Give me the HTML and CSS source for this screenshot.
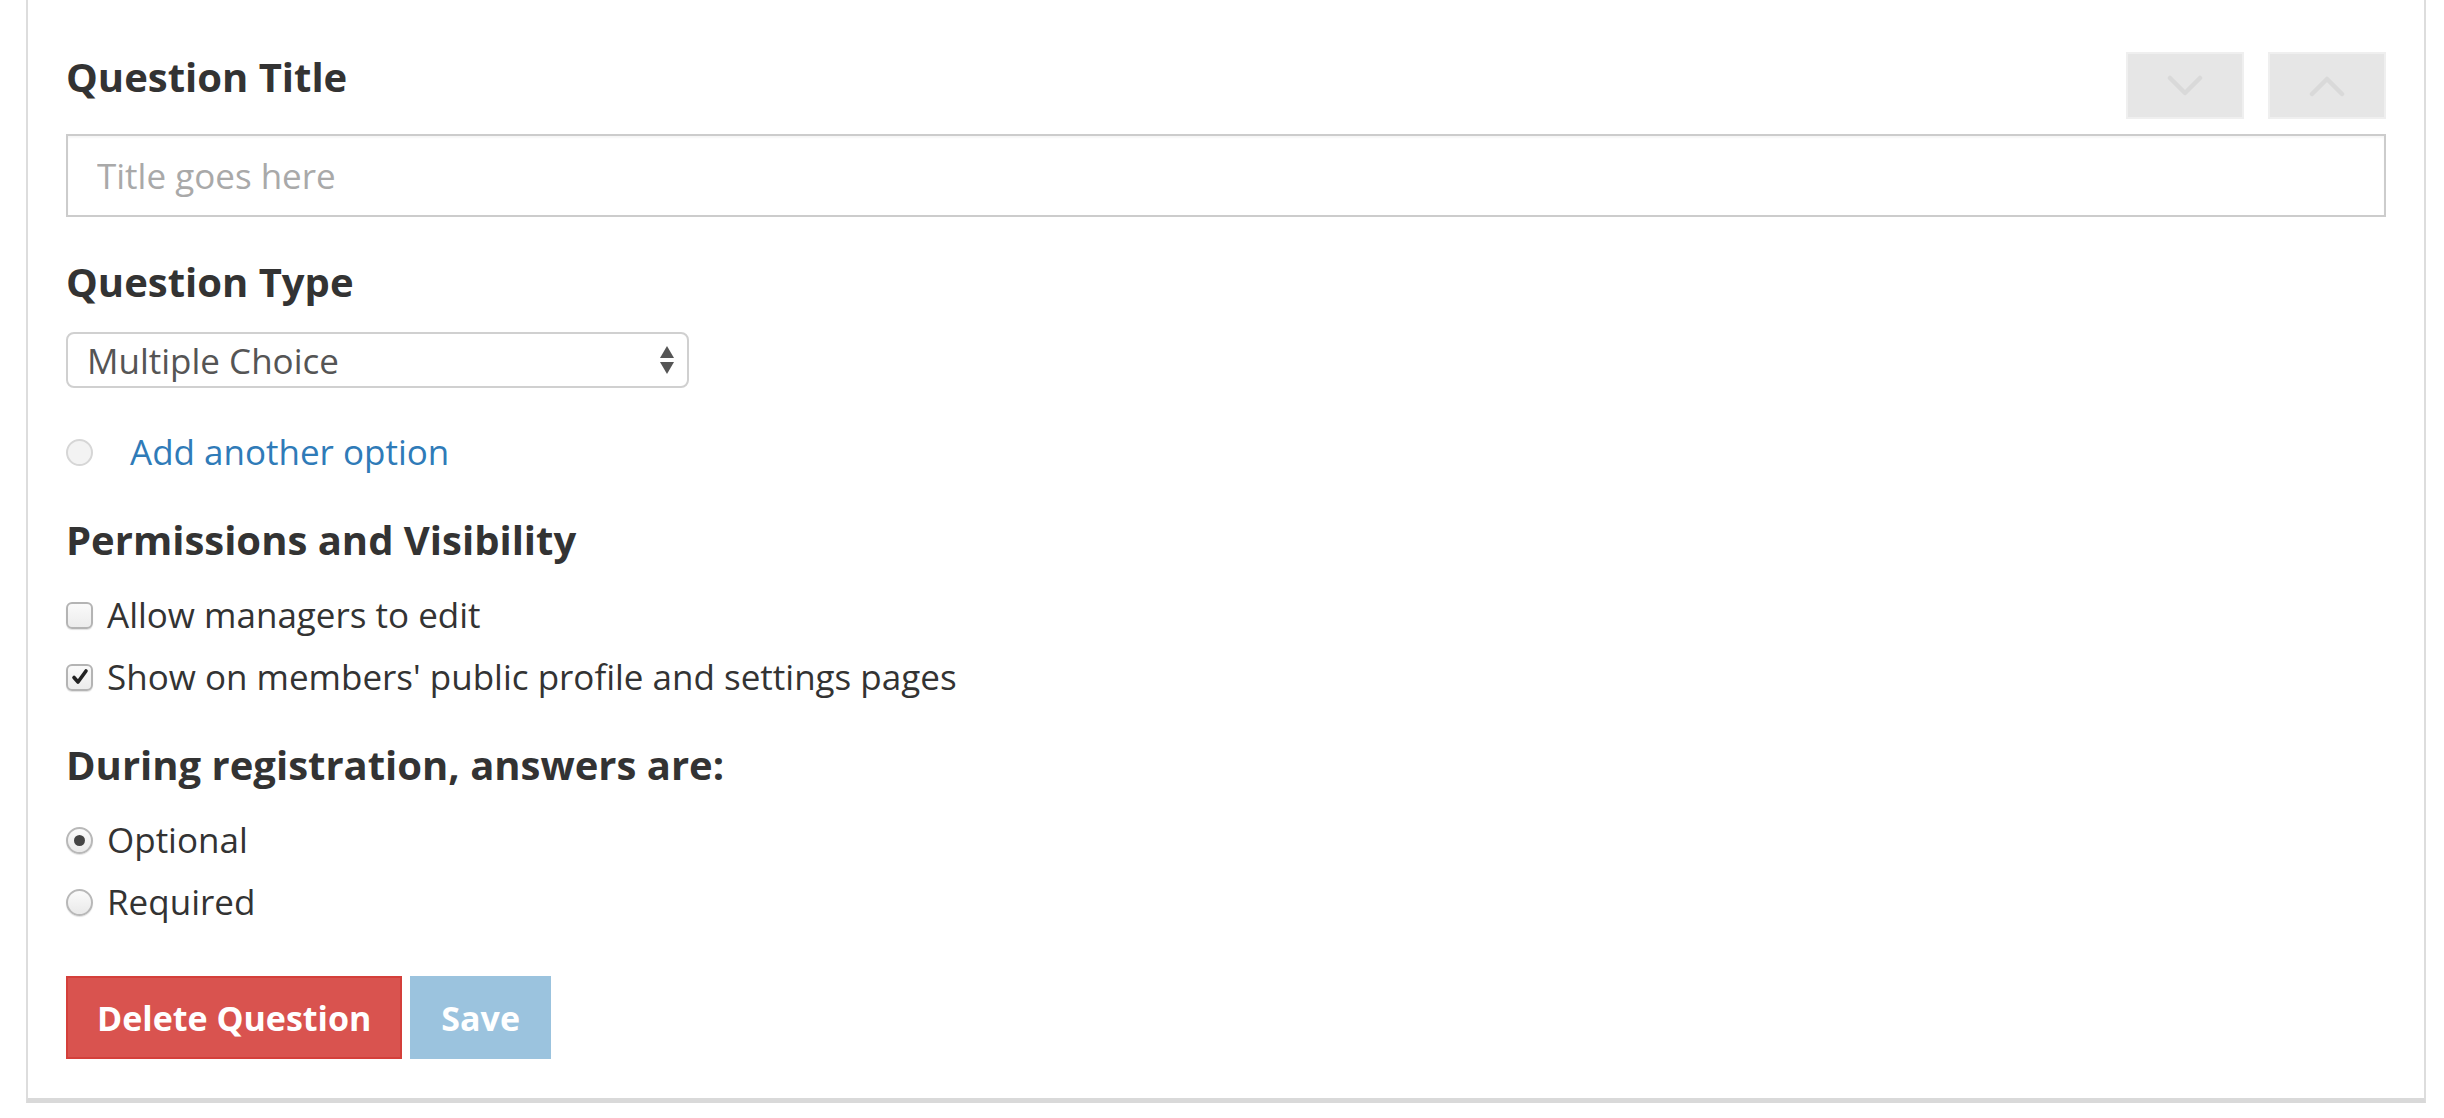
FILE: index.html
```html
<!DOCTYPE html>
<html lang="en">
<head>
<meta charset="UTF-8">
<meta name="viewport" content="width=device-width, initial-scale=1.0">
<title>Edit Question</title>
<link rel="stylesheet" href="styles.css">
</head>
<body>
<div class="panel">
  <div class="panel-head">
    <h4>Question Title</h4>
    <div class="move-group">
      <button class="move-btn" aria-label="Move down">
        <svg width="36" height="22" viewBox="0 0 36 22"><path d="M3 3 L18 18 L33 3" fill="none" stroke="#d9d9d9" stroke-width="4.5" stroke-linecap="round" stroke-linejoin="round"/></svg>
      </button>
      <button class="move-btn" aria-label="Move up">
        <svg width="36" height="22" viewBox="0 0 36 22"><path d="M3 19 L18 4 L33 19" fill="none" stroke="#d9d9d9" stroke-width="4.5" stroke-linecap="round" stroke-linejoin="round"/></svg>
      </button>
    </div>
  </div>

  <input type="text" class="title-input" placeholder="Title goes here">

  <h4 class="section">Question Type</h4>
  <div class="select-box">
    <span>Multiple Choice</span>
    <svg class="select-arrows" width="16" height="32" viewBox="0 0 16 32"><path d="M8 2 L15 14 L1 14 Z" fill="#555"/><path d="M1 18 L15 18 L8 30 Z" fill="#555"/></svg>
  </div>

  <div class="option-row">
    <span class="radio radio-off"></span>
    <a href="#" class="add-link">Add another option</a>
  </div>

  <h4 class="section perm">Permissions and Visibility</h4>
  <label class="check-row">
    <span class="checkbox"></span>
    Allow managers to edit
  </label>
  <label class="check-row">
    <span class="checkbox">
      <svg width="20" height="20" viewBox="0 0 20 20"><path d="M4 10.5 L8 15 L16 4" fill="none" stroke="#222" stroke-width="3.6" stroke-linecap="round" stroke-linejoin="round"/></svg>
    </span>
    Show on members' public profile and settings pages
  </label>

  <h4 class="section perm">During registration, answers are:</h4>
  <label class="check-row">
    <span class="radio"><span class="dot"></span></span>
    Optional
  </label>
  <label class="check-row">
    <span class="radio"></span>
    Required
  </label>

  <div class="actions">
    <button class="btn btn-danger">Delete Question</button>
    <button class="btn btn-save">Save</button>
  </div>
</div>
</body>
</html>
```

FILE: styles.css
```css
body {
  margin: 0;
  font-family: "Open Sans", "Liberation Sans", sans-serif;
  color: #333;
  background: #fff;
}
.panel {
  margin-left: 26px;
  width: 2400px;
  box-sizing: border-box;
  border-left: 2px solid #ddd;
  border-right: 2px solid #ddd;
  border-bottom: 5px solid #d9d9d9;
  padding: 52px 38px 39px 38px;
}
.panel-head {
  display: flex;
  justify-content: space-between;
  align-items: flex-start;
  height: 67px;
}
h4 {
  margin: 0;
  font-size: 40px;
  font-weight: 700;
  line-height: 44px;
}
.panel-head h4 {
  margin-top: 3px;
}
.move-group {
  display: flex;
  gap: 24px;
}
.move-btn {
  width: 118px;
  height: 67px;
  background: #e6e6e6;
  border: 2px solid #efefef;
  padding: 0;
  display: flex;
  align-items: center;
  justify-content: center;
}
.title-input {
  display: block;
  margin-top: 15px;
  width: 100%;
  height: 83px;
  box-sizing: border-box;
  border: 2px solid #ccc;
  box-shadow: inset 0 2px 2px rgba(0, 0, 0, 0.04);
  padding: 0 29px;
  font-family: inherit;
  font-size: 35px;
  color: #555;
}
.title-input::placeholder {
  color: #a9a9a9;
}
.section {
  margin-top: 43px;
}
.select-box {
  margin-top: 28px;
  width: 623px;
  height: 56px;
  box-sizing: border-box;
  border: 2px solid #d0d0d0;
  border-radius: 8px;
  display: flex;
  align-items: center;
  justify-content: space-between;
  padding: 0 12px 0 19px;
  font-size: 35px;
  color: #555;
}
.option-row {
  margin-top: 40px;
  display: flex;
  align-items: center;
  font-size: 35px;
  line-height: 48px;
}
.add-link {
  color: #2f7bb8;
  text-decoration: none;
  margin-left: 37px;
}
.perm {
  margin-top: 42px;
  margin-bottom: 29px;
}
.check-row {
  display: flex;
  align-items: center;
  font-size: 35px;
  line-height: 48px;
  margin-bottom: 14px;
  gap: 14px;
}
.checkbox {
  width: 27px;
  height: 27px;
  box-sizing: border-box;
  border: 2px solid #b4b4b4;
  border-radius: 6px;
  background: linear-gradient(#fafafa, #ececec);
  box-shadow: 0 1px 1px rgba(0, 0, 0, 0.12);
  display: flex;
  align-items: center;
  justify-content: center;
}
.radio {
  width: 27px;
  height: 27px;
  box-sizing: border-box;
  border: 2px solid #b8b8b8;
  border-radius: 50%;
  background: linear-gradient(#fbfbfb, #e9e9e9);
  box-shadow: 0 1px 1px rgba(0, 0, 0, 0.12);
  display: flex;
  align-items: center;
  justify-content: center;
}
.radio-off {
  border-color: #d6d6d6;
  background: #f3f3f3;
  box-shadow: none;
}
.dot {
  width: 11px;
  height: 11px;
  border-radius: 50%;
  background: #444;
}
.actions {
  margin-top: 50px;
  display: flex;
  gap: 8px;
}
.btn {
  height: 83px;
  border: 2px solid transparent;
  padding: 0 29px;
  font-family: inherit;
  font-size: 34px;
  font-weight: 700;
  color: #fff;
}
.btn-danger {
  background: #d9534f;
  border-color: #d43f3a;
}
.btn-save {
  background: #9bc3de;
  border-color: #9bc3de;
}
```
